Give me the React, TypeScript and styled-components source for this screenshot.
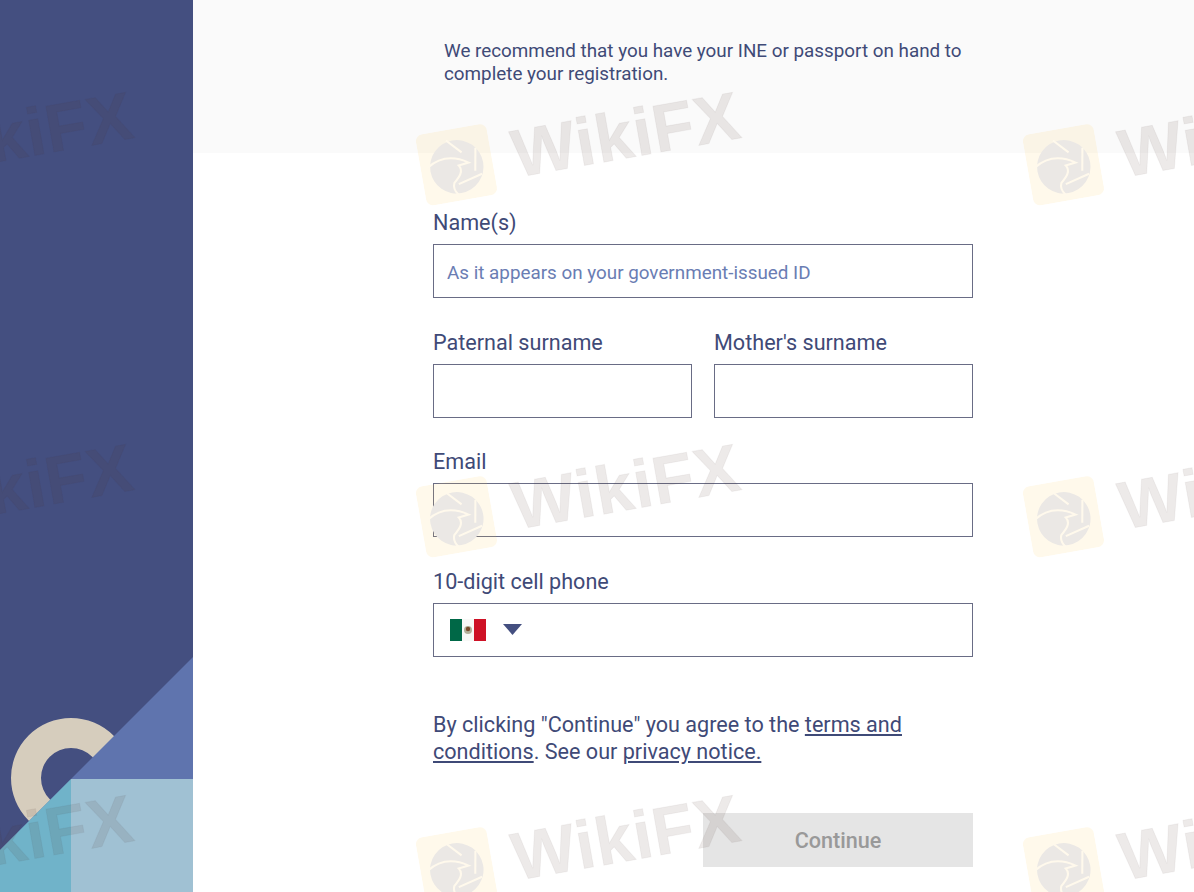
import { createGlobalStyle, styled } from "styled-components";

const colors = {
  navy: "#444f80",
  text: "#3f4a77",
  placeholder: "#6a7db3",
  border: "#696c85",
  band: "#fafafa",
};

const GlobalStyle = createGlobalStyle`
  html, body {
    margin: 0;
    height: 100%;
    background: #fff;
    overflow: hidden;
  }
  * {
    box-sizing: border-box;
  }
`;

const Page = styled.div`
  position: relative;
  display: flex;
  width: 1194px;
  height: 892px;
  overflow: hidden;
  font-family: Roboto, "Liberation Sans", sans-serif;
  color: ${colors.text};
`;

const Sidebar = styled.aside`
  flex: 0 0 193px;
  background: ${colors.navy};
`;

const SidebarArt = styled.svg`
  display: block;
  width: 193px;
  height: 892px;
`;

const Main = styled.main`
  flex: 1;
  display: flex;
  flex-direction: column;
`;

const NoticeBand = styled.div`
  height: 153px;
  padding: 40px 0 0 251px;
  background: ${colors.band};
`;

const Notice = styled.p`
  margin: 0;
  width: 540px;
  font-size: 18.83px;
  line-height: 23px;
`;

const Form = styled.form`
  width: 540px;
  margin: 57px 0 0 240px;
  display: flex;
  flex-direction: column;
  gap: 31.67px;
`;

const Row = styled.div`
  display: grid;
  grid-template-columns: 259px 259px;
  column-gap: 22px;
`;

const Field = styled.label`
  display: flex;
  flex-direction: column;
`;

const LabelText = styled.span`
  height: 34px;
  padding-top: 1px;
  font-size: 21.6px;
  line-height: 24px;
`;

const TextInput = styled.input`
  height: 54px;
  width: 100%;
  padding: 4px 13px 0;
  border: 1px solid ${colors.border};
  border-radius: 0;
  background: transparent;
  font-family: inherit;
  font-size: 18.83px;
  color: ${colors.text};
  outline: none;

  &::placeholder {
    color: ${colors.placeholder};
    opacity: 1;
  }
`;

const PhoneBox = styled.div`
  height: 54px;
  display: flex;
  align-items: center;
  gap: 17px;
  padding-left: 16px;
  border: 1px solid ${colors.border};
`;

const FlagIcon = styled.svg`
  width: 36px;
  height: 22px;
  display: block;
`;

const Caret = styled.svg`
  width: 19px;
  height: 11px;
  display: block;
`;

const Terms = styled.p`
  margin: 22.33px 0 0;
  font-size: 21.6px;
  line-height: 27px;
`;

const TermsLink = styled.a`
  color: inherit;
  text-decoration: underline;
`;

const ButtonRow = styled.div`
  display: flex;
  justify-content: flex-end;
  margin-top: 48px;
`;

const ContinueButton = styled.button`
  width: 270px;
  height: 54px;
  padding: 2px 0 0;
  border: 0;
  background: #e5e5e5;
  color: #999;
  font-family: inherit;
  font-size: 21.6px;
  font-weight: 500;
`;

const WatermarkLayer = styled.div`
  position: absolute;
  inset: 0;
  pointer-events: none;
`;

const Watermark = styled.div<{ $x: number; $y: number }>`
  position: absolute;
  left: ${(p) => p.$x}px;
  top: ${(p) => p.$y}px;
  display: flex;
  align-items: center;
  gap: 21px;
  white-space: nowrap;
  transform: rotate(-10deg);
  transform-origin: left center;
`;

const WatermarkBadge = styled.svg`
  width: 72px;
  height: 72px;
  flex: none;
  display: block;
`;

const WatermarkText = styled.span`
  font-family: "Liberation Sans", Arial, sans-serif;
  font-size: 67.5px;
  font-weight: 700;
  line-height: 80px;
  letter-spacing: 1px;
  color: rgba(85, 55, 50, 0.105);
  -webkit-text-stroke: 1px rgba(85, 55, 50, 0.05);
`;

const WikiBadge = () => (
  <WatermarkBadge viewBox="0 0 70 70">
    <rect width="70" height="70" rx="7" fill="rgba(255, 200, 70, 0.11)" />
    <circle cx="35" cy="37" r="26" fill="#ebe8e5" />
    <path
      d="M29 10 L42 24 M56 22 L52 44 M58 48 L34 54 M7 33 C20 25 34 26 47 35 L37 36 C41 42 36 47 30 52 C28 56 29 60 32 64"
      fill="none"
      stroke="#fff9ec"
      strokeWidth="2"
    />
  </WatermarkBadge>
);

const marks = [-186, 421, 1028].flatMap((x) =>
  [131, 483, 834].map((y) => ({ x, y }))
);

const App = () => {
  return (
    <Page>
      <GlobalStyle />
      <Sidebar>
        <SidebarArt viewBox="0 0 193 892">
          <rect width="193" height="892" fill={colors.navy} />
          <path
            fillRule="evenodd"
            d="M11 778 a60 60 0 1 0 120 0 a60 60 0 1 0 -120 0 Z M41 778 a30 30 0 1 0 60 0 a30 30 0 1 0 -60 0 Z"
            fill="#d6cdbd"
          />
          <path d="M193 657 L0 850 V892 H193 Z" fill="#5f74ae" />
          <rect x="71" y="779" width="122" height="113" fill="#a0c1d3" />
          <path d="M71 779 V892 H0 V850 Z" fill="#70b3c9" />
        </SidebarArt>
      </Sidebar>
      <Main>
        <NoticeBand>
          <Notice>
            We recommend that you have your INE or passport on hand to complete
            your registration.
          </Notice>
        </NoticeBand>
        <Form>
          <Field>
            <LabelText>Name(s)</LabelText>
            <TextInput placeholder="As it appears on your government-issued ID" />
          </Field>
          <Row>
            <Field>
              <LabelText>Paternal surname</LabelText>
              <TextInput />
            </Field>
            <Field>
              <LabelText>Mother's surname</LabelText>
              <TextInput />
            </Field>
          </Row>
          <Field>
            <LabelText>Email</LabelText>
            <TextInput />
          </Field>
          <Field>
            <LabelText>10-digit cell phone</LabelText>
            <PhoneBox>
              <FlagIcon viewBox="0 0 36 22">
                <rect width="12" height="22" fill="#006847" />
                <rect x="12" width="12" height="22" fill="#f8f8f6" />
                <rect x="24" width="12" height="22" fill="#ce1126" />
                <circle cx="18" cy="11" r="4" fill="#b3b09a" />
                <circle cx="18" cy="10" r="2.2" fill="#7a4a2a" />
              </FlagIcon>
              <Caret viewBox="0 0 19 11">
                <path d="M0 0 H19 L9.5 11 Z" fill={colors.navy} />
              </Caret>
            </PhoneBox>
          </Field>
          <div>
            <Terms>
              By clicking "Continue" you agree to the{" "}
              <TermsLink href="#">terms and conditions</TermsLink>. See our{" "}
              <TermsLink href="#">privacy notice.</TermsLink>
            </Terms>
            <ButtonRow>
              <ContinueButton type="button" disabled>
                Continue
              </ContinueButton>
            </ButtonRow>
          </div>
        </Form>
      </Main>
      <WatermarkLayer>
        {marks.map((m) => (
          <Watermark key={`${m.x}-${m.y}`} $x={m.x} $y={m.y}>
            <WikiBadge />
            <WatermarkText>WikiFX</WatermarkText>
          </Watermark>
        ))}
      </WatermarkLayer>
    </Page>
  );
};

export default App;
